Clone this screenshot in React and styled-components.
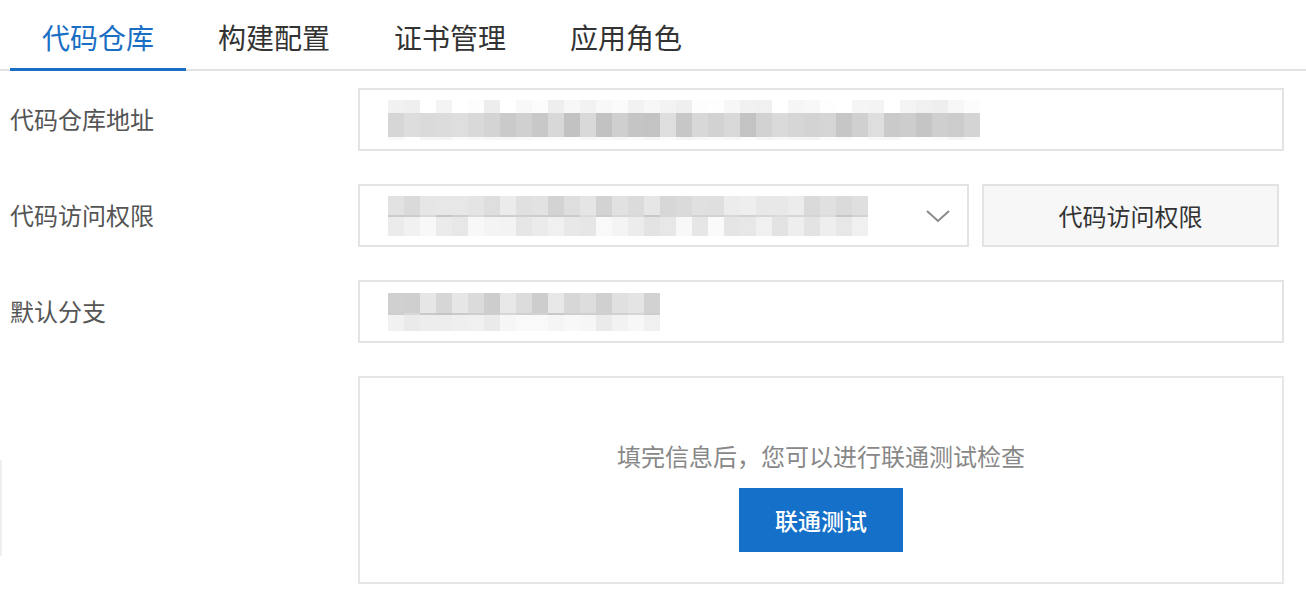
import React from 'react'
import styled, { createGlobalStyle } from 'styled-components'


const GlobalStyle = createGlobalStyle`
    body {
        margin: 0;
        background: #fff;
        font-family: "Noto Sans CJK SC", "Noto Sans", sans-serif;
    }
`

const StyledPage = styled.div`
    width: 1306px;
`

const StyledTabBar = styled.ul`
    display: flex;
    margin: 0;
    padding: 0 0 0 10px;
    list-style: none;
    border-bottom: 2px solid #e2e2e2;
`

const StyledTab = styled.li`
    width: 176px;
    margin-bottom: -2px;
    padding: 18px 0 11px;
    box-sizing: border-box;

    color: ${ ({ $active }) => $active ? '#1a6fc4' : '#333' };
    font-size: 28px;
    line-height: 39px;
    text-align: center;
    border-bottom: 3px solid ${ ({ $active }) => $active ? '#1a6fc4' : 'transparent' };
`

const StyledForm = styled.div`
    display: grid;
    grid-template-columns: 358px 926px;
    row-gap: 33px;
    padding-top: 17px;
`

const StyledLabel = styled.div`
    display: flex;
    align-items: center;
    height: 61px;
    padding-left: 10px;

    color: #555;
    font-size: 24px;
`

const StyledEdge = styled.div`
    width: 2px;
    height: 96px;
    margin-top: 84px;
    background: #efefef;
`

const StyledInput = styled.div`
    display: flex;
    align-items: center;
    width: ${ ({ $width }) => $width || '100%' };
    height: 63px;
    padding: 0 16px 0 28px;
    box-sizing: border-box;

    border: 2px solid #e3e3e3;
    background: #fff;
`

const StyledFieldRow = styled.div`
    display: flex;
    gap: 13px;
`

const StyledChevron = styled.svg`
    margin-left: auto;
    flex-shrink: 0;
`

const StyledGhostButton = styled.button`
    width: 297px;
    height: 63px;
    padding: 0;

    color: #333;
    font-family: inherit;
    font-size: 24px;
    background: #f7f7f7;
    border: 2px solid #e3e3e3;
`

const StyledCard = styled.div`
    display: flex;
    flex-direction: column;
    align-items: center;
    gap: 15px;
    height: 208px;
    padding-top: 61px;
    box-sizing: border-box;

    border: 2px solid #e6e6e6;
`

const StyledHint = styled.p`
    margin: 0;

    color: #888;
    font-size: 24px;
    line-height: 34px;
`

const StyledPrimary = styled.button`
    width: 164px;
    height: 64px;
    padding: 0;

    color: #fff;
    font-family: inherit;
    font-size: 23px;
    font-weight: 500;
    background: #1470c8;
    border: none;
`

const StyledBlur = styled.div`
    display: flex;
`

const StyledBlurCol = styled.div`
    display: flex;
    flex-direction: column;
    width: 16px;
`

const StyledBlurCell = styled.div`
    height: ${ ({ $h }) => $h }px;
    background: ${ ({ $c }) => $c };
`


/**
 * Grey level for one cell of a pixelated strip
 */
const shade = ( i, j, seed, { base, spread } ) => {
    const n = Math.abs( Math.sin( i * 12.9898 + j * 78.233 + seed ) * 43758.5453 ) % 1
    const c = Math.min( 255, Math.round( base + n * spread ))
    return `rgb(${ c },${ c },${ c })`
}

// pixelated stand-in for the masked values in the reference
const Blur = ({ cols, rows, seed }) => (
    <StyledBlur>
        { Array.from({ length: cols }, ( _, i ) => (
            <StyledBlurCol key={ i }>
                { rows.map(( r, j ) => (
                    <StyledBlurCell key={ j } $h={ r.h } $c={ shade( i, j, seed, r ) } />
                )) }
            </StyledBlurCol>
        )) }
    </StyledBlur>
)

const urlRows = [
    { h: 13, base: 236, spread: 22 },
    { h: 24, base: 192, spread: 30 },
    { h: 3, base: 244, spread: 10 },
]

const accessRows = [
    { h: 19, base: 210, spread: 30 },
    { h: 2, base: 198, spread: 22 },
    { h: 19, base: 226, spread: 24 },
]

const branchRows = [
    { h: 20, base: 204, spread: 28 },
    { h: 2, base: 196, spread: 20 },
    { h: 16, base: 232, spread: 18 },
]

const tabs = [ '代码仓库', '构建配置', '证书管理', '应用角色' ]


const App = () => (
    <StyledPage>
        <GlobalStyle />
        <StyledTabBar>
            { tabs.map(( tab, i ) => (
                <StyledTab key={ tab } $active={ i === 0 }>{ tab }</StyledTab>
            )) }
        </StyledTabBar>

        <StyledForm>
            <StyledLabel>代码仓库地址</StyledLabel>
            <StyledInput>
                <Blur cols={ 37 } rows={ urlRows } seed={ 3 } />
            </StyledInput>

            <StyledLabel>代码访问权限</StyledLabel>
            <StyledFieldRow>
                <StyledInput $width="611px">
                    <Blur cols={ 30 } rows={ accessRows } seed={ 1 } />
                    <StyledChevron width="26" height="16" viewBox="0 0 26 16">
                        <polyline points="2,3 13,13 24,3" fill="none" stroke="#8a8a8a" strokeWidth="2" />
                    </StyledChevron>
                </StyledInput>
                <StyledGhostButton>代码访问权限</StyledGhostButton>
            </StyledFieldRow>

            <StyledLabel>默认分支</StyledLabel>
            <StyledInput>
                <Blur cols={ 17 } rows={ branchRows } seed={ 5 } />
            </StyledInput>

            <div>
                <StyledEdge />
            </div>
            <StyledCard>
                <StyledHint>填完信息后，您可以进行联通测试检查</StyledHint>
                <StyledPrimary>联通测试</StyledPrimary>
            </StyledCard>
        </StyledForm>
    </StyledPage>
)


export default App
